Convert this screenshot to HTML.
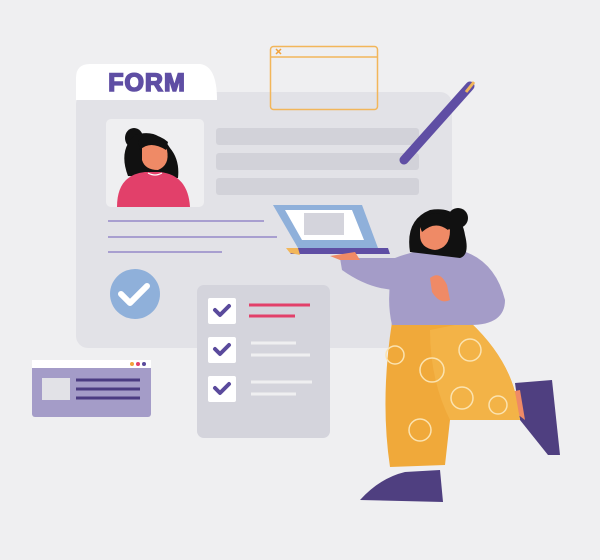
<!DOCTYPE html>
<html><head><meta charset="utf-8"><style>
html,body{margin:0;padding:0;background:#efeff1;width:600px;height:560px;overflow:hidden}
svg{display:block}
</style></head><body>
<svg width="600" height="560" viewBox="0 0 600 560" xmlns="http://www.w3.org/2000/svg">
<rect width="600" height="560" fill="#efeff1"/>
<!-- main card -->
<rect x="76" y="92" width="376" height="256" rx="12" fill="#e2e2e7"/>
<path d="M76 100 V78 Q76 64 90 64 H200 Q217 66 217 100 Z" fill="#ffffff"/>
<text x="147" y="91" text-anchor="middle" font-family="Liberation Sans, sans-serif" font-weight="900" font-size="25" fill="#5f4ea4" stroke="#5f4ea4" stroke-width="1.6" letter-spacing="1">FORM</text>
<!-- orange window -->
<rect x="270.5" y="46.5" width="107" height="63" rx="3" fill="none" stroke="#f2b65a" stroke-width="1.5"/>
<line x1="271" y1="57" x2="377" y2="57" stroke="#f2b65a" stroke-width="1.5"/>
<path d="M276 49 l5 5 M281 49 l-5 5" stroke="#f2a23a" stroke-width="1.5"/>
<!-- photo box -->
<rect x="106" y="119" width="98" height="88" rx="5" fill="#efeff1"/>
<ellipse cx="134" cy="138" rx="9" ry="10" fill="#111"/>
<path d="M128 176 Q118 150 135 135 Q158 128 170 148 Q180 160 178 178 Z" fill="#111"/>
<path d="M142 142 Q160 135 167 150 Q170 165 158 170 Q145 170 142 160 Z" fill="#ef8a66"/>
<path d="M138 140 Q155 130 168 142 L166 150 Q150 140 140 150 Z" fill="#111"/>
<path d="M117 207 Q117 175 145 172 H160 Q188 175 190 207 Z" fill="#e2406a"/>
<path d="M148 173 Q155 177 162 173" stroke="#fff" fill="none" stroke-width="1.2"/>
<!-- gray bars -->
<rect x="216" y="128" width="203" height="17" rx="3" fill="#d2d2d9"/>
<rect x="216" y="153" width="203" height="17" rx="3" fill="#d2d2d9"/>
<rect x="216" y="178" width="203" height="17" rx="3" fill="#d2d2d9"/>
<!-- purple lines -->
<g stroke="#a89fd0" stroke-width="2">
<line x1="108" y1="221" x2="264" y2="221"/>
<line x1="108" y1="237" x2="277" y2="237"/>
<line x1="108" y1="252" x2="222" y2="252"/>
</g>
<!-- check circle -->
<circle cx="135" cy="294" r="25" fill="#8fb0da"/>
<path d="M121 294 l9 9 l17 -17" stroke="#fff" stroke-width="6" fill="none" stroke-linecap="round" stroke-linejoin="round"/>
<!-- pen -->
<line x1="404" y1="160" x2="470" y2="86" stroke="#5f4ea4" stroke-width="9" stroke-linecap="round"/>
<line x1="466" y1="92" x2="474" y2="82" stroke="#f2b65a" stroke-width="3"/>
<!-- checklist -->
<rect x="197" y="285" width="133" height="153" rx="7" fill="#d4d4dc"/>
<g fill="#fff"><rect x="208" y="298" width="28" height="26" rx="2"/><rect x="208" y="337" width="28" height="26" rx="2"/><rect x="208" y="376" width="28" height="26" rx="2"/></g>
<g stroke="#5a4a9c" stroke-width="4" fill="none" stroke-linecap="round" stroke-linejoin="round">
<path d="M215 310 l5 5 l9 -9"/><path d="M215 349 l5 5 l9 -9"/><path d="M215 388 l5 5 l9 -9"/></g>
<g stroke="#e2406a" stroke-width="3"><line x1="249" y1="305" x2="310" y2="305"/><line x1="249" y1="316" x2="295" y2="316"/></g>
<g stroke="#efeff1" stroke-width="3"><line x1="251" y1="343" x2="296" y2="343"/><line x1="251" y1="355" x2="310" y2="355"/><line x1="251" y1="382" x2="312" y2="382"/><line x1="251" y1="394" x2="296" y2="394"/></g>
<!-- small window -->
<rect x="32" y="360" width="119" height="57" rx="3" fill="#a49cc8"/>
<rect x="32" y="360" width="119" height="8" fill="#fff"/>
<circle cx="132" cy="364" r="2" fill="#f2a23a"/><circle cx="138" cy="364" r="2" fill="#e2406a"/><circle cx="144" cy="364" r="2" fill="#5a4a9c"/>
<rect x="42" y="378" width="28" height="22" fill="#e2e2e7"/>
<g stroke="#4b3c82" stroke-width="3"><line x1="76" y1="380" x2="140" y2="380"/><line x1="76" y1="389" x2="140" y2="389"/><line x1="76" y1="398" x2="140" y2="398"/></g>
<!-- person -->
<path d="M515 383 L552 380 L560 455 L548 455 L520 420 Z" fill="#4f3f80"/>
<path d="M510 392 L520 390 L525 420 L512 410 Z" fill="#ef8a66"/>
<path d="M360 500 Q380 478 405 472 L440 470 L443 502 Z" fill="#4f3f80"/>
<path d="M392 322 L470 322 Q505 355 515 392 L520 420 L450 420 L445 465 L390 467 Q380 400 392 322 Z" fill="#f0a93a"/>
<path d="M430 330 L470 322 Q505 355 515 392 L520 420 L450 420 Q430 380 430 330 Z" fill="#f3b347"/>
<g stroke="#fbe3b0" stroke-width="1.5" fill="none">
<circle cx="432" cy="370" r="12"/><circle cx="470" cy="350" r="11"/><circle cx="462" cy="398" r="11"/><circle cx="420" cy="430" r="11"/><circle cx="395" cy="355" r="9"/><circle cx="498" cy="405" r="9"/></g>
<path d="M395 258 Q425 246 460 250 Q495 260 505 300 Q505 325 470 325 L392 325 Q385 295 395 258 Z" fill="#a49cc8"/>
<path d="M395 258 L340 258 L342 270 Q370 290 398 290 Z" fill="#a49cc8"/>
<path d="M430 278 Q440 270 447 285 L450 300 Q440 305 432 292 Z" fill="#ef8a66"/>
<circle cx="458" cy="218" r="10" fill="#111"/>
<path d="M410 252 Q405 220 430 210 Q460 205 465 235 Q470 255 460 258 Z" fill="#111"/>
<path d="M420 225 Q440 215 450 230 Q450 248 435 250 Q420 248 420 235 Z" fill="#ef8a66"/>
<path d="M418 222 Q435 205 455 222 L448 230 Q435 220 422 232 Z" fill="#111"/>
<!-- laptop -->
<path d="M273 205 L362 205 L378 248 L298 248 Z" fill="#8fb0da"/>
<path d="M285 210 L352 210 L364 240 L302 240 Z" fill="#fff"/>
<rect x="304" y="213" width="40" height="22" fill="#d4d4dc"/>
<path d="M298 248 L388 248 L390 254 L290 254 Z" fill="#5f4ea4"/>
<path d="M286 248 L298 248 L300 255 L290 253 Z" fill="#f2b65a"/>
<path d="M330 256 L355 252 L360 260 L340 260 Z" fill="#ef8a66"/>
</svg>
</body></html>
